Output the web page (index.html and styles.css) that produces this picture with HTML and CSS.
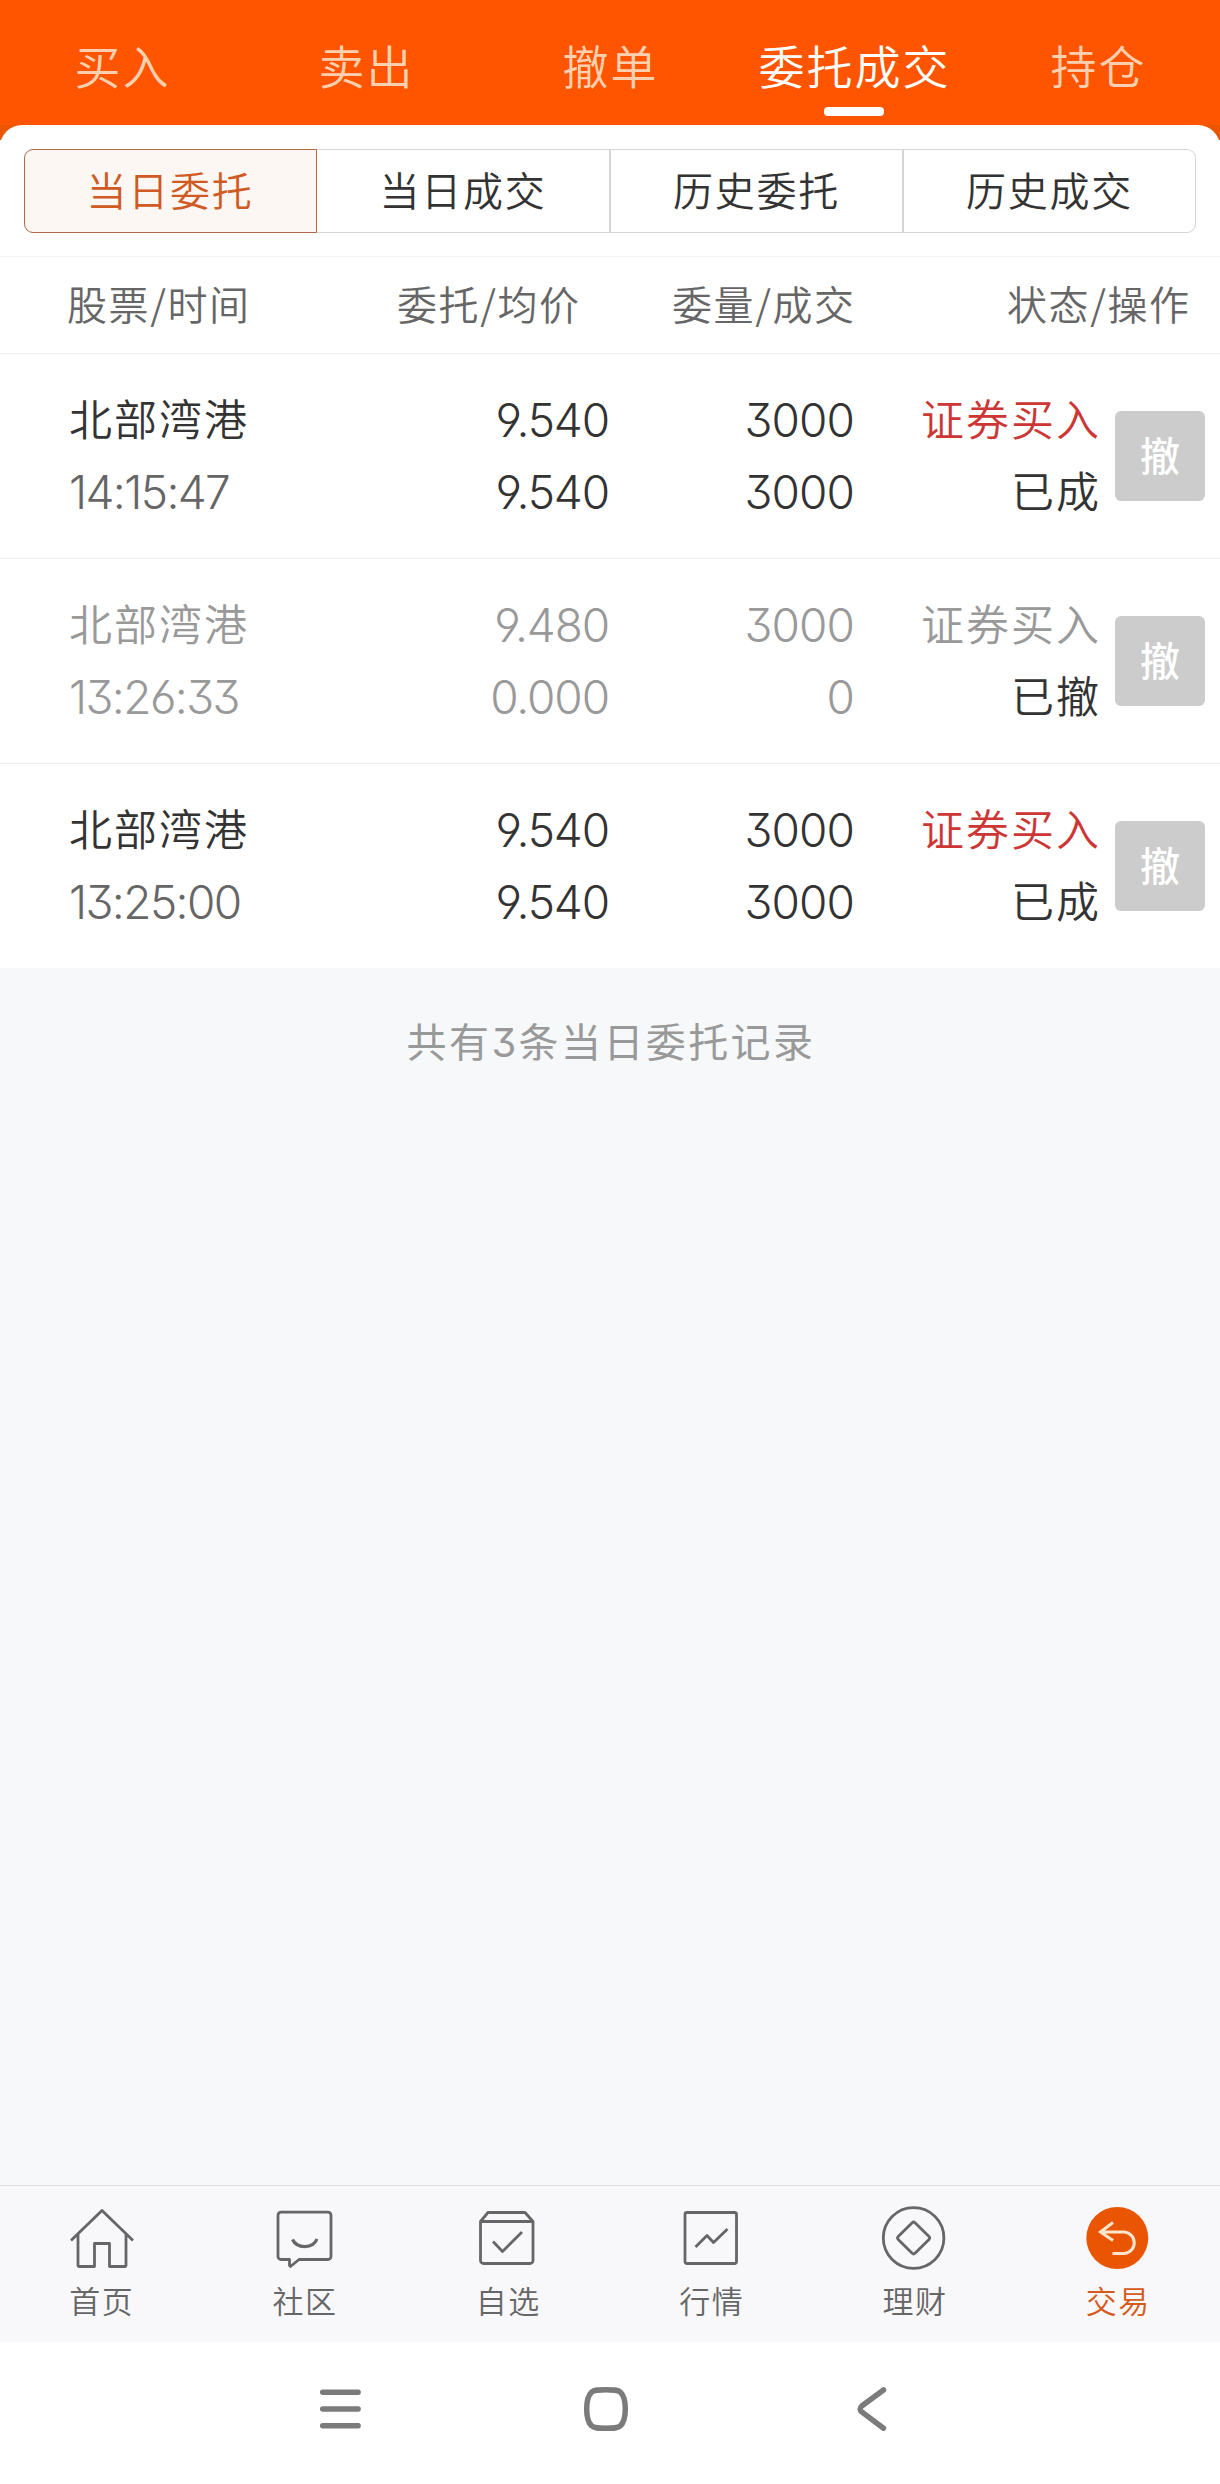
FILE: index.html
```html
<!DOCTYPE html>
<html lang="zh-CN">
<head>
<meta charset="utf-8">
<title>委托成交</title>
<link rel="stylesheet" href="styles.css">
</head>
<body>
<div class="screen">
  <nav class="top-tabs">
    <a class="top-tab">买入</a>
    <a class="top-tab">卖出</a>
    <a class="top-tab">撤单</a>
    <a class="top-tab active">委托成交</a>
    <a class="top-tab">持仓</a>
  </nav>
  <div class="sheet-back">
    <section class="sheet">
      <div class="segments">
        <button class="segment selected">当日委托</button>
        <button class="segment">当日成交</button>
        <button class="segment">历史委托</button>
        <button class="segment">历史成交</button>
      </div>
      <div class="list-head">
        <span class="h-name">股票/时间</span>
        <span class="h-price">委托/均价</span>
        <span class="h-count">委量/成交</span>
        <span class="h-state">状态/操作</span>
      </div>
      <article class="order">
        <div class="cell name"><span>北部湾港</span><span class="num time">14:15:47</span></div>
        <div class="cell right num price"><span>9.540</span><span>9.540</span></div>
        <div class="cell right num count"><span>3000</span><span>3000</span></div>
        <div class="cell right state"><span class="buy">证券买入</span><span class="status">已成</span></div>
        <button class="cancel">撤</button>
      </article>
      <article class="order revoked">
        <div class="cell name"><span>北部湾港</span><span class="num time">13:26:33</span></div>
        <div class="cell right num price"><span>9.480</span><span>0.000</span></div>
        <div class="cell right num count"><span>3000</span><span>0</span></div>
        <div class="cell right state"><span class="buy">证券买入</span><span class="status">已撤</span></div>
        <button class="cancel">撤</button>
      </article>
      <article class="order">
        <div class="cell name"><span>北部湾港</span><span class="num time">13:25:00</span></div>
        <div class="cell right num price"><span>9.540</span><span>9.540</span></div>
        <div class="cell right num count"><span>3000</span><span>3000</span></div>
        <div class="cell right state"><span class="buy">证券买入</span><span class="status">已成</span></div>
        <button class="cancel">撤</button>
      </article>
    </section>
  </div>
  <main class="rest"><p class="summary">共有<span class="num">3</span>条当日委托记录</p></main>
  <nav class="tabbar">
    <a class="tab">
      <svg class="icon" viewBox="0 0 70 70"><path d="M4 37.500 35 7.500 66 37.500M11 31.500V62.500a1 1 0 0 0 1 1H27.500V40.500H42.500V63.500H58a1 1 0 0 0 1-1V31.500"/></svg>
      <span>首页</span>
    </a>
    <a class="tab">
      <svg class="icon" viewBox="0 0 70 70"><path d="M11 9.200H58a3 3 0 0 1 3 3V53.500a3 3 0 0 1-3 3H29L20.500 63.500 19.500 62.500V56.500H11a3 3 0 0 1-3-3V12.200a3 3 0 0 1 3-3Z"/><path d="M22.500 36.500C27 46 43 46 47 36" stroke-width="3.200"/></svg>
      <span>社区</span>
    </a>
    <a class="tab">
      <svg class="icon" viewBox="0 0 70 70"><path d="M7.500 18.500 15 9.500H52L60 18.500V57.500a3 3 0 0 1-3 3H10.500a3 3 0 0 1-3-3ZM7.500 18.500H60M20 38.500 29.500 48.500 49 29"/></svg>
      <span>自选</span>
    </a>
    <a class="tab">
      <svg class="icon" viewBox="0 0 70 70"><rect x="8" y="9.500" width="51.500" height="51" rx="2"/><path d="M18.500 44 30 32.500 36.500 39.500 50.500 26"/></svg>
      <span>行情</span>
    </a>
    <a class="tab">
      <svg class="icon" viewBox="0 0 70 70"><circle cx="33.600" cy="35" r="30.300"/><path d="M32.200 19.800Q33.600 18.200 35 19.800L49 33.600Q50.400 35 49 36.400L35 50.200Q33.600 51.800 32.200 50.200L18.200 36.400Q16.800 35 18.200 33.600Z"/></svg>
      <span>理财</span>
    </a>
    <a class="tab current">
      <svg class="icon" viewBox="0 0 70 70"><circle class="disc" cx="34.300" cy="35" r="31"/><path class="arrow" d="M30 19.500 17.500 29 30 37.500M17.500 29H41.500a10.800 10.800 0 0 1 0 21.500H29.500"/></svg>
      <span>交易</span>
    </a>
  </nav>
  <footer class="system-nav">
    <svg class="sys" viewBox="0 0 50 50"><path d="M7.700 8.300H43.100M7.700 25H43.100M7.700 41.700H43.100"/></svg>
    <svg class="sys" viewBox="0 0 50 50"><path d="M25 5.800C33 5.800 37 5.800 39.500 8.200S44.300 14 44.300 25 42 39.400 39.500 41.800 33 44.200 25 44.200 13 44.200 10.500 41.800 5.700 36 5.700 25 8 10.600 10.500 8.200 17 5.800 25 5.800Z"/></svg>
    <svg class="sys" viewBox="0 0 50 50"><path d="M36.500 6 14.800 22Q11.500 25 14.800 28L36.500 44.200"/></svg>
  </footer>
</div>
</body>
</html>
```
FILE: styles.css
```css
* { box-sizing: border-box; }

body {
  margin: 0;
  font-family: "Noto Sans CJK SC", sans-serif;
  font-weight: 350;
  color: #333;
  background: #fff;
}

button {
  font: inherit;
  color: inherit;
  padding: 0;
  border: 0;
}

.screen {
  width: 1220px;
  height: 2484px;
  display: flex;
  flex-direction: column;
}

.num {
  font-family: Inter, "Noto Sans CJK SC", sans-serif;
  font-feature-settings: "cv03", "cv04", "cv09";
}

/* Top tabs */
.top-tabs {
  height: 125px;
  flex: none;
  display: grid;
  grid-template-columns: repeat(5, 1fr);
  background: #ff5500;
}

.top-tab {
  display: flex;
  flex-direction: column;
  align-items: center;
  padding-top: 29px;
  font-size: 46px;
  line-height: 70px;
  letter-spacing: 2px;
  text-indent: 1px;
  color: #ffd0b0;
}

.top-tab.active { color: #fff; }

.top-tab.active::after {
  content: "";
  width: 60px;
  height: 9px;
  margin-top: 8px;
  border-radius: 4px;
  background: #fff;
}

/* Order sheet */
.sheet-back {
  flex: none;
  background: linear-gradient(#ec5500 15px, #fff 15px);
}

.sheet {
  background: #fff;
  border-radius: 22px 22px 0 0;
  padding-top: 24px;
}

.segments {
  display: grid;
  grid-template-columns: 293px 294px 293px 292px;
  height: 84px;
  margin: 0 24px 23px;
}

.segment {
  padding-bottom: 4px;
  font-size: 40px;
  letter-spacing: 1.700px;
  background: #fff;
  border: 1px solid #d3d5d7;
  border-left-width: 0;
  border-right-width: 2px;
}

.segment:last-child {
  border-right-width: 1px;
  border-radius: 0 9px 9px 0;
}

.segment.selected {
  padding-right: 1px;
  color: #cf5a23;
  background: #fdf7f3;
  border: 1px solid #b06a4a;
  border-radius: 9px 0 0 9px;
}

.list-head {
  height: 97px;
  display: grid;
  grid-template-columns: 397px 275px 334px 1fr;
  align-items: center;
  padding-bottom: 4px;
  border-top: 1px solid #f4f4f5;
  font-size: 40px;
  letter-spacing: 1.600px;
  color: #666;
}

.h-name { padding-left: 67px; }
.h-state { padding-left: 1px; }

.order {
  height: 205px;
  display: grid;
  grid-template-columns: 69px 262px 278px 245px 247px 1fr;
  border-top: 1px solid #ececec;
  font-size: 43px;
  padding-top: 30px;
}

.cell {
  display: flex;
  flex-direction: column;
  line-height: 72px;
  letter-spacing: 2px;
}

/* The CJK glyphs sit lower in the line than the Latin digits */
.name > :first-child, .state > * { margin-top: -3px; margin-bottom: 3px; }
.right { align-items: flex-end; text-align: right; }
.name { grid-column: 2; }
.cell.num, .time { font-size: 46px; font-weight: 300; }
.price { letter-spacing: -1.100px; }
.count { letter-spacing: -0.900px; }
.time { letter-spacing: -1.600px; color: #666; }
.buy { color: #cc3735; }
.revoked { color: #999; }
.revoked .time, .revoked .buy { color: #999; }
.revoked .status { color: #333; }

.cancel {
  width: 90px;
  height: 90px;
  margin: 27px 0 0 14px;
  padding-bottom: 4px;
  border-radius: 6px;
  background: #ccc;
  color: #fff;
  font-size: 40px;
  font-weight: 500;
}

.rest {
  flex: 1;
  background: #f7f8fa;
}

.summary {
  margin: 0;
  padding-top: 42px;
  text-align: center;
  font-size: 40px;
  line-height: 60px;
  letter-spacing: 2.400px;
  text-indent: 2px;
  font-weight: 400;
  color: #999;
}

/* Bottom tabs */
.tabbar {
  height: 157px;
  flex: none;
  display: grid;
  grid-template-columns: repeat(6, 1fr);
  background: #f8f8fb;
  border-top: 1px solid #dfe2e3;
}

.tab {
  display: flex;
  flex-direction: column;
  align-items: center;
  padding-top: 17px;
  font-size: 31px;
  line-height: 46px;
  letter-spacing: 1.500px;
  color: #666;
}

.icon {
  width: 70px;
  height: 70px;
  margin-bottom: 4px;
  fill: none;
  stroke: #666;
  stroke-width: 2.800;
  stroke-linejoin: round;
}

.tab.current { color: #d45a20; }
.disc { fill: #ea5504; stroke: none; }
.arrow { stroke: #ffe5cc; stroke-width: 3; stroke-linejoin: miter; }

.system-nav {
  height: 142px;
  flex: none;
  display: flex;
  justify-content: center;
  gap: 216px;
  padding: 42px 8px 0 0;
  background: #fff;
}

.sys {
  width: 50px;
  height: 50px;
  fill: none;
  stroke: #7b7b7b;
  stroke-width: 5.500;
  stroke-linecap: round;
}
```
